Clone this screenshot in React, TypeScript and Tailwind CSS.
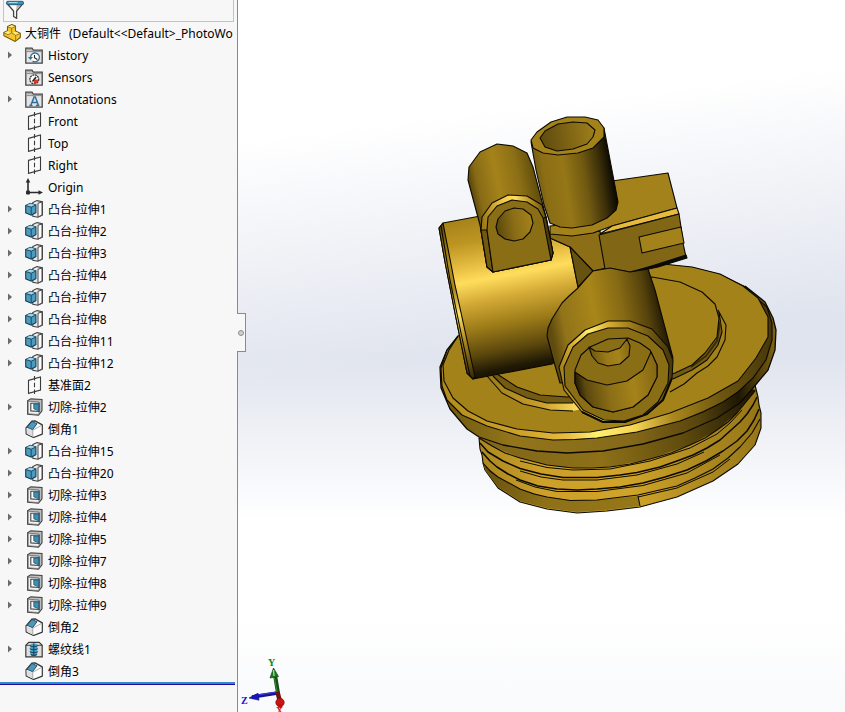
import { useState } from "react";

type IconName =
  | "history"
  | "sensors"
  | "annotations"
  | "plane"
  | "origin"
  | "boss"
  | "cut"
  | "chamfer"
  | "thread";

interface Feature {
  label: string;
  icon: IconName;
  expandable?: boolean;
}

const features: Feature[] = [
  { label: "History", icon: "history", expandable: true },
  { label: "Sensors", icon: "sensors" },
  { label: "Annotations", icon: "annotations", expandable: true },
  { label: "Front", icon: "plane" },
  { label: "Top", icon: "plane" },
  { label: "Right", icon: "plane" },
  { label: "Origin", icon: "origin" },
  { label: "凸台-拉伸1", icon: "boss", expandable: true },
  { label: "凸台-拉伸2", icon: "boss", expandable: true },
  { label: "凸台-拉伸3", icon: "boss", expandable: true },
  { label: "凸台-拉伸4", icon: "boss", expandable: true },
  { label: "凸台-拉伸7", icon: "boss", expandable: true },
  { label: "凸台-拉伸8", icon: "boss", expandable: true },
  { label: "凸台-拉伸11", icon: "boss", expandable: true },
  { label: "凸台-拉伸12", icon: "boss", expandable: true },
  { label: "基准面2", icon: "plane" },
  { label: "切除-拉伸2", icon: "cut", expandable: true },
  { label: "倒角1", icon: "chamfer" },
  { label: "凸台-拉伸15", icon: "boss", expandable: true },
  { label: "凸台-拉伸20", icon: "boss", expandable: true },
  { label: "切除-拉伸3", icon: "cut", expandable: true },
  { label: "切除-拉伸4", icon: "cut", expandable: true },
  { label: "切除-拉伸5", icon: "cut", expandable: true },
  { label: "切除-拉伸7", icon: "cut", expandable: true },
  { label: "切除-拉伸8", icon: "cut", expandable: true },
  { label: "切除-拉伸9", icon: "cut", expandable: true },
  { label: "倒角2", icon: "chamfer" },
  { label: "螺纹线1", icon: "thread", expandable: true },
  { label: "倒角3", icon: "chamfer" },
];

const Folder = () => (
  <>
    <path d="M.8 17.2V2.2H7l1.2 2h9v13z" fill="#e4e4e4" stroke="#444" strokeWidth="1.3" />
    <path d="M1.5 5.6h15.2" stroke="#8a8a8a" strokeWidth="1" />
    <path d="M1.6 3h5l1 1.6h-6z" fill="#a8a8a8" />
  </>
);

const FeatureIcon = ({ name }: { name: IconName }) => (
  <svg viewBox="0 0 18 18" className="size-[18px] shrink-0" fill="none" aria-hidden="true">
    {name === "history" && (
      <>
        <Folder />
        <circle cx="10" cy="11.5" r="4.2" fill="#fff" />
        <path d="M5.6 11.5a4.4 4.4 0 1 1 2 3.6" stroke="#2f7196" strokeWidth="1.3" />
        <path d="M3 11h5l-2.5 3z" fill="#2f7196" />
        <path d="M9.5 9v2.7l2.8 1.8" stroke="#222" strokeWidth="1.1" />
      </>
    )}
    {name === "sensors" && (
      <>
        <Folder />
        <circle cx="9.3" cy="11.3" r="4.4" fill="#fff" stroke="#333" strokeWidth="1.3" strokeDasharray="2 .6" />
        <path d="M9.3 11.5h4.2a4.2 4.2 0 0 1-4.8 4.2z" fill="#e2341d" />
        <path d="M7.5 13.5l3.6-4.4" stroke="#222" strokeWidth="1.6" />
      </>
    )}
    {name === "annotations" && (
      <>
        <Folder />
        <path
          d="M8.3 7h2l3 8M9 7.4l-3.2 7.8M6.8 12.4h5M4.3 15.5h3.2M10.8 15.5h3.6"
          stroke="#2f7196"
          strokeWidth="1.5"
        />
      </>
    )}
    {name === "plane" && (
      <>
        <path d="M3.5 4.4l12-3.4v13l-12 3.4z" fill="#fafafa" stroke="#3a3a3a" strokeWidth="1.1" />
        <path d="M9.5 0v18" stroke="#3a3a3a" strokeWidth="1.1" strokeDasharray="4.5 2.2" />
      </>
    )}
    {name === "origin" && (
      <>
        <path d="M3 3v11.5h12" stroke="#2b2b2b" strokeWidth="1.6" />
        <path d="M3 0l2.3 4.6H.7zM18 14.5l-4.5-2.2v4.4z" fill="#2b2b2b" />
        <rect x="1" y="12.5" width="4" height="4" rx="1" fill="#2b2b2b" />
      </>
    )}
    {name === "boss" && (
      <>
        <path d="M7.8 2.4L12 .6l5.4 1.2v13.4l-4.6 2-5-1z" fill="#e9e9e9" stroke="#444" strokeWidth="1.1" />
        <path d="M13 3.2l4-1.2v13l-4 2z" fill="#fff" stroke="#444" strokeWidth="1" />
        <path d="M.7 5.4l4.6-2 5.6 1.6v7.6l-4.7 2.6-5.5-2.4z" fill="#4c9cc0" stroke="#173f55" strokeWidth="1.1" />
        <path d="M.9 5.6l5.4 1.5L10.800 5l-5.400-1.500z" fill="#9dd1e6" />
        <path d="M.8 5.6l5.4 1.6v7.8M6.2 7.2L10.800 5" stroke="#173f55" strokeWidth=".9" />
      </>
    )}
    {name === "cut" && (
      <>
        <path d="M2.600 2.800L5.800.9l11.200.6v11.400L13.500 17.200 2.600 16.300z" fill="#bdbdbd" stroke="#444" strokeWidth="1.100" />
        <path d="M3.200 3.200l10.800.8v12.600l-10.800-.8z" fill="#f1f1f1" stroke="#666" strokeWidth=".8" />
        <path d="M5.800 5.300h8.400v8.200l-8.400-.6z" fill="#fff" stroke="#444" strokeWidth="1.100" />
        <path d="M8.800 6h4.800v6.800l-4.800-2z" fill="#3d8fb6" stroke="#205670" strokeWidth=".8" />
      </>
    )}
    {name === "chamfer" && (
      <>
        <path d="M1 7.800L6.800 1.200 10 .9l7.300 4v9.200L8.500 17.500 1.200 14z" fill="#fff" stroke="#333" strokeWidth="1.200" strokeLinejoin="round" />
        <path d="M1.600 8.200l6.400 2.600v6L1.800 13.700z" fill="#dedede" />
        <path d="M2 7.300l5-5.800 5 2.200-4.400 6z" fill="#4c97ba" stroke="#1d4b63" strokeWidth=".9" />
        <path d="M7.800 10.200v7M7.800 10.200l9.200-5" stroke="#999" strokeWidth=".8" />
      </>
    )}
    {name === "thread" && (
      <>
        <path d="M.8 16.8V5.2l3-2.8h10.4l3 2.8v11.6z" fill="#dedede" stroke="#3a3a3a" strokeWidth="1.2" />
        <path d="M1 5.3h16" stroke="#3a3a3a" strokeWidth=".9" />
        <rect x="5.3" y="3.4" width="7" height="12.4" rx="2.5" fill="#4a9dc6" />
        <path
          d="M4.8 5.5c1 1.6 7 1.6 8 0M4.8 8.5c1 1.6 7 1.6 8 0M4.8 11.5c1 1.6 7 1.6 8 0M5.8 14.400c1 1.400 5 1.400 6 0M8.800 3.500v12.500"
          stroke="#16465f"
          strokeWidth="1.1"
        />
      </>
    )}
  </svg>
);

const FilterIcon = () => (
  <svg viewBox="0 0 18 19" className="h-[19px] w-[18px] shrink-0" aria-hidden="true">
    <path d="M1 3.5L7.6 11v5.5l3 1.8V11l6.3-7.5z" fill="#fff" stroke="#444" strokeWidth="1.3" />
    <path d="M10 10.5l5-6v-1h-4z" fill="#b5b5b5" />
    <rect x=".6" y="1.3" width="16.8" height="3.4" rx="1.2" fill="#3f92ba" stroke="#1f5772" strokeWidth=".9" />
    <path d="M2.5 2.5h9" stroke="#a8dcf0" />
  </svg>
);

const PartIcon = () => (
  <svg viewBox="0 0 18 18" className="size-[18px] shrink-0" aria-hidden="true" strokeLinejoin="round">
    <path
      d="M.8 8.500l3.700-1.700V2.500L8.800.6l3.700 1.500v5l4.800 2.200v4.200L12.200 17.400.9 11.800z"
      fill="#f3c72c"
      stroke="#7c5c0c"
      strokeWidth="1.1"
    />
    <path d="M5 2.700L8.800 1.200l3.200 1.200-3.400 1.500zM1.300 8.700l3.500-1.600 3.500 1.900-3.200 1.600zM9.500 8.800l3-1.100 4.200 1.900-3.800 1.800z" fill="#ffe98a" />
    <path d="M8.600 4.200v4.600l4 2.500v5.800M12.600 11.300l4.500-1.900M8.600 4.200l3.700-1.700M4.700 2.800l3.900 1.400M1 8.800l4 2M5 10.800l3.600-2" fill="none" stroke="#8b6a10" strokeWidth=".8" />
  </svg>
);

const FeatureRow = ({ feature }: { feature: Feature }) => {
  const [open, setOpen] = useState(false);
  return (
    <li className="flex h-[22px] items-center">
      <div className="flex w-[25px] shrink-0 pl-[7px]">
        {feature.expandable && (
          <button
            aria-label={`Expand ${feature.label}`}
            aria-expanded={open}
            onClick={() => setOpen(!open)}
            className="flex h-4 w-3 items-center"
          >
            <svg viewBox="0 0 6 8" className="h-2 w-[6px]">
              <path d="M1 .5l4 3.5-4 3.5z" fill="#6a6a6a" />
            </svg>
          </button>
        )}
      </div>
      <FeatureIcon name={feature.icon} />
      <span className="pt-[2px] pl-[5px] whitespace-nowrap">{feature.label}</span>
    </li>
  );
};

const FeatureTree = () => (
  <aside className="flex w-[238px] shrink-0 flex-col border-r border-[#8a8a8a] bg-[#f7f7f7] pr-[2px]">
    <label className="mr-px ml-[3px] flex h-[22px] items-start border border-t-0 border-[#c3c3c3] pl-[2px]">
      <FilterIcon />
      <input type="text" aria-label="Filter" className="h-full min-w-0 flex-1 bg-transparent px-1 outline-none" />
    </label>
    <div className="flex h-[22px] items-center gap-1 overflow-hidden pl-[3px]">
      <PartIcon />
      <h1 className="flex gap-2 pt-[2px] whitespace-nowrap">
        <span>大铜件</span>
        <span>(Default&lt;&lt;Default&gt;_PhotoWo</span>
      </h1>
    </div>
    <ul>
      {features.map((feature) => (
        <FeatureRow key={feature.label} feature={feature} />
      ))}
    </ul>
    <div className="h-[3px] border-b border-[#1c0a9c] bg-[#318bcb]" />
  </aside>
);

const Face = ({ pts, fill }: { pts: string; fill: string }) => (
  <polygon points={pts} fill={fill} stroke="none" />
);

const Shade = ({ id, line, stops }: { id: string; line: number[]; stops: [number, string][] }) => (
  <linearGradient id={id} gradientUnits="userSpaceOnUse" x1={line[0]} y1={line[1]} x2={line[2]} y2={line[3]}>
    {stops.map(([offset, color]) => (
      <stop key={offset} offset={offset} stopColor={color} />
    ))}
  </linearGradient>
);

const Model = () => (
  <svg
    viewBox="238 0 607 712"
    className="h-full w-full"
    role="img"
    aria-label="大铜件"
    fill="none"
    stroke="#0c0900"
    strokeWidth="1.1"
    strokeLinejoin="round"
  >
    <defs>
      <Shade id="barrel" line={[497, 212, 528, 372]} stops={[[0, "#a5821a"], [0.15, "#bd9522"], [0.3, "#e8bf43"], [0.39, "#ffdd5c"], [0.52, "#d4aa36"], [0.68, "#9c7b18"], [0.84, "#5c480d"], [0.95, "#1f1804"], [1, "#151002"]]} />
      <Shade id="barrelRim" line={[440, 225, 473, 378]} stops={[[0, "#5e490d"], [0.25, "#b38d1d"], [0.42, "#a98519"], [0.58, "#ffe56a"], [0.75, "#b08a1c"], [1, "#33280a"]]} />
      <Shade id="tube" line={[535, 190, 613, 178]} stops={[[0, "#6f5811"], [0.15, "#8b6e15"], [0.4, "#957717"], [0.65, "#705911"], [0.85, "#3d300a"], [1, "#0d0a01"]]} />
      <Shade id="tubeBore" line={[540, 140, 595, 132]} stops={[[0, "#5f4b0e"], [0.35, "#735b12"], [1, "#9f7e1a"]]} />
      <Shade id="lug" line={[470, 190, 540, 176]} stops={[[0, "#574409"], [0.12, "#866a15"], [0.4, "#a5831a"], [0.7, "#8c6f16"], [1, "#584509"]]} />
      <Shade id="lugEdge" line={[483, 220, 546, 210]} stops={[[0, "#9c7b18"], [0.35, "#f2c948"], [0.55, "#ffdc62"], [0.8, "#b18b1e"], [1, "#5f4b0f"]]} />
      <Shade id="lugBore" line={[496, 228, 533, 222]} stops={[[0, "#5b470c"], [0.5, "#8a6d16"], [1, "#a5831b"]]} />
      <Shade id="pipe" line={[550, 325, 663, 303]} stops={[[0, "#5f4b0e"], [0.12, "#91731a"], [0.4, "#a88619"], [0.65, "#856914"], [0.85, "#56430c"], [1, "#1c1503"]]} />
      <Shade id="pipeEdge" line={[560, 365, 672, 345]} stops={[[0, "#a58219"], [0.15, "#dcb138"], [0.3, "#ffee6c"], [0.48, "#d8ae37"], [0.7, "#94751a"], [1, "#3f320a"]]} />
      <Shade id="pipeBore" line={[576, 390, 657, 376]} stops={[[0, "#1f1804"], [0.12, "#5c490e"], [0.4, "#8b6e16"], [0.7, "#a5831a"], [1, "#846813"]]} />
      <Shade id="innerBore" line={[590, 358, 630, 350]} stops={[[0, "#6a540f"], [0.4, "#9a7a18"], [0.7, "#a5831a"], [1, "#846813"]]} />
      <Shade id="discSide" line={[440, 410, 776, 370]} stops={[[0, "#6c560f"], [0.2, "#93751a"], [0.55, "#85691a"], [0.75, "#5a460d"], [0.88, "#1e1703"], [0.96, "#5a460c"], [1, "#7b6113"]]} />
      <Shade id="discEdge" line={[443, 400, 770, 380]} stops={[[0, "#b18c1d"], [0.25, "#d1a42a"], [0.38, "#e8c043"], [0.46, "#fff070"], [0.58, "#f5d455"], [0.7, "#a9861d"], [0.85, "#6c5610"], [1, "#4a3a0b"]]} />
      <Shade id="neck" line={[490, 450, 755, 400]} stops={[[0, "#80661a"], [0.4, "#8d7017"], [0.7, "#624d0e"], [1, "#1d1603"]]} />
      <Shade id="threads" line={[480, 470, 762, 420]} stops={[[0, "#a9861d"], [0.2, "#cca029"], [0.5, "#d0a429"], [0.75, "#af8b20"], [1, "#957517"]]} />
      <Shade id="skirt" line={[484, 480, 640, 505]} stops={[[0, "#69520f"], [0.4, "#8d7018"], [1, "#967819"]]} />
      <Shade id="groove" line={[490, 390, 580, 408]} stops={[[0, "#a07e1a"], [0.6, "#caa02c"], [1, "#ffdf62"]]} />
    </defs>

    {/* threaded base */}
    <polygon
      fill="url(#threads)"
      points="479,438 480,449 482,455 483,463 485,470 498,488 520,502 547,509 577,513 607,511 640,507 677,497 713,481 738,464 755,445 761,428 761,413 759,405 758,397 755,385 620,400"
    />
    <Face
      fill="url(#skirt)"
      pts="485,470 483,463 498,477 520,489 547,497 570,500 597,500 638,496 640,506 607,510 577,512 547,508 520,501 498,487"
    />
    <polyline points="483,463 490,471 498,477 520,489 534,494 547,497 570,500.500 597,500 638,495 677,486 695,478 713,469 728,458 740,447 752,433 760,419" />
    <polyline points="638,497 677,488 713,472 730,459" strokeWidth="1" />
    <polyline points="638,496 640,506" />
    <polyline points="482,452 490,461 497,467 508,474 520,480 538,486 557,489 577,490 597,489 620,487 643,483 665,477 687,470 706,461 723,451 737,441 747,431 754,420 759,409" strokeWidth="1.500" />
    <polyline points="516,480 535,487 557,491.500 597,491.500 643,485.500 687,473 720,455" strokeWidth="1" />
    <polyline points="480,443 488,452 503,461 520,468.500 541,474 563,477.500 597,477.500 620,475 637,472.500 660,467 677,461 693,455 707,448 720,440 730,431 740,422 747,414 753,405 757,397" strokeWidth="1.500" />
    <polyline points="520,471 541,477 563,480 597,480 637,475 677,464 704,452" strokeWidth="1" />
    <polyline points="520,461 547,467.500 573,470 610,469 650,461 690,448 717,434 730,423 742,410" strokeWidth="1" />
    <Face
      fill="url(#neck)"
      pts="479,438 492,446 520,458 547,465 573,468 610,467 650,459 690,445 717,430 737,413 756,390 700,380 500,420"
    />
    <polyline points="479,438 492,446 505,453 520,458 547,465 573,468 592,468 610,467 630,464 650,459 671,453 690,445 705,438 717,430 728,422 737,413 755,391" />

    {/* flange disc */}
    <Face
      fill="url(#discSide)"
      pts="458,336 447,350 440,367 441,388 450,409 467,429 479,437 503,445 537,451 567,453 603,451 643,444 683,433 717,418 740,403 753,388 768,370 775,350 776,330 773,318 765,302 745,286 720,274 692,267 663,264"
    />
    <Face
      fill="url(#discEdge)"
      pts="447,350 441,368 442,386 447,400 462,415 487,426 520,436 553,440 597,438 637,432 680,421 723,402 748,384 766,360 772,340 772,323 767,307 743,286 600,300"
    />
    <polyline points="447,350 441,368 442,386 447,400 462,415 487,426 520,436 553,440 575,439.500 597,438 637,432 680,421 703,412 723,402 738,392 753,378 766,360 772,340 772,323 767,307 743,286" />
    <polygon
      points="458,336 449,350 443,365 444,381 453,398 468,411 487,421 517,429 553,433 590,432 630,425 670,413 708,398 738,381 756,358 768,337 768,317 758,298 743,286 720,274 692,267 663,264 560,290"
      fill="#a3821a"
    />
    <polyline points="458,336 447,350 440,367 441,388 450,409 467,429 479,437 503,445 537,451 567,453 603,451 643,444 683,433 717,418 740,403 753,388 768,370 775,350 776,330 773,318 765,302 745,286" strokeWidth="1.300" />

    {/* raised platform */}
    <Face fill="url(#groove)" pts="487,376 502,393 523,404 550,410 573,411 620,400 600,300" />
    <polyline points="487,376 502,393 523,404 550,410 573,411" />
    <Face fill="#a3821a" pts="670,392 697,373 717,357 725,340 726,325 719,312 660,340" />
    <polyline points="670,392 684,384 697,373 708,366 717,357 725,340 726,325 718,310" />
    <Face
      pts="493,376 505,388 527,398 547,403 573,403 620,395 673,379 692,370 707,360 718,345 722,332 719,312 600,300"
      fill="#735b12"
    />
    <polyline points="493,376 505,388 527,398 547,403 573,403" />
    <polyline points="673,379 692,370 707,360 718,345 722,332 719,312" />
    <polyline points="691,367 706,356 717,341 720,322" stroke="#3a2e08" strokeWidth="2" />
    <polygon
      points="497,374 517,387 540,395 567,397 610,393 675,373 692,365 705,353 717,337 719,318 715,304 702,292 680,282 652,277 560,300"
      fill="#a3821a"
    />

    {/* horizontal barrel */}
    <polygon
      points="443,223 439,228 445,262 455,313 467,373 473,379 552,364 590,330 578,287 570,247 550,238 520,208 475,217"
      fill="url(#barrel)"
    />
    <polygon points="443,223 439,228 445,262 455,313 467,373 473,379 475,377 455,285" fill="url(#barrelRim)" />
    <polyline points="441,226 450,280 461,333 470,376" />

    {/* web between the barrel and the block */}
    <polygon points="550,232 570,235 600,231 606,268 593,271 570,247 550,238" fill="#8b6e16" />
    <polygon points="570,247 593,271 578,287" fill="#67520f" />

    {/* block */}
    <polygon points="612,181 668,173 677,208 612,226 593,233 572,236 550,234 550,226 590,222" fill="#a3821b" />
    <polygon points="612,226 677,208 679,214 600,234" fill="#e6bb3d" />
    <polygon points="599,235 679,214 681,227 683,243 686,257 630,272 613,269 605,269" fill="#806615" />
    <polygon points="639,237 681,227 684,243 642,253" fill="#a3821b" />
    <polygon points="686,255 687,258 658,267 630,273" fill="#0c0900" />

    {/* vertical tube */}
    <polygon points="531,142 536,170 544,205 550,223 560,227 572,228 592,225 607,218 616,210 618,202 604,128" fill="url(#tube)" />
    <polygon
      points="531,140 537,132 551,122 567,117 585,117 598,120 604,128 604,137 598,143 593,148 578,153 558,155 543,153 533,148"
      fill="#a3821a"
    />
    <polygon
      points="540,138 545,131 558,124 573,122 587,123 595,130 593,137 587,144 573,149 557,151 545,147"
      fill="url(#tubeBore)"
    />

    {/* lug */}
    <polygon
      points="469,167 480,152 497,144 513,146 527,153 533,167 546,217 553,253 551,260 493,272 487,267 480,225 468,180"
      fill="url(#lug)"
    />
    <polygon
      points="481,230 482,217 492,203 508,195 527,196 542,205 546,217 553,253 551,260 493,272 487,267"
      fill="url(#lugEdge)"
    />
    <polygon points="481,230 487,230 493,272 487,267" fill="#71590f" />
    <polygon points="542,219 546,217 553,253 551,260" fill="#4d3d0b" />
    <polygon
      points="487,230 488,217 497,206 512,200 527,202 538,209 543,218 551,260 493,272"
      fill="#8a6e16"
    />
    <polygon
      points="496,227 498,219 505,211 514,208 523,209 531,215 533,223 530,232 523,239 514,241 505,239 498,234"
      fill="url(#lugBore)"
    />

    {/* front pipe */}
    <polygon
      points="593,271 610,268 630,272 648,269 655,290 673,358 640,380 560,383 554,362 547,336 548,328 552,319 562,303 569,296 578,288"
      fill="url(#pipe)"
    />
    <polygon
      points="559,367 568,345 585,330 608,321 630,321 652,329 668,347 673,360 672,378 663,400 647,414 625,422 603,422 582,412 564,390"
      fill="url(#pipeEdge)"
    />
    <polyline points="672,378 663,400 647,414 625,422 603,422 582,412" strokeWidth="2" />
    <polygon
      points="564,367 573,347 588,334 608,328 628,328 648,336 663,350 669,365 668,383 658,402 643,415 624,421 604,420 583,410 565,386"
      fill="#8a6e16"
    />
    <polygon
      points="575,370 581,355 590,347 608,339 628,338 640,343 650,350 657,365 657,377 648,395 633,407 613,412 593,407 580,395 575,383"
      fill="#8a6e16"
    />
    <polygon
      points="575,372 587,380 607,385 627,381 643,370 651,352 657,365 657,377 648,395 633,407 613,412 593,407 580,395 575,383"
      fill="url(#pipeBore)"
    />
    <polygon
      points="589,347 595,351 608,352 620,348 627,339 630,346 629,356 620,364 608,366 598,363 592,356"
      fill="url(#innerBore)"
    />
  </svg>
);

const Triad = () => (
  <svg
    viewBox="0 0 50 56"
    className="absolute bottom-0 left-0 h-14 w-[50px] font-['Liberation_Serif',serif] text-[10px] font-bold"
    aria-label="Axes"
  >
    <path d="M39.5 37L14 41" stroke="#15158f" strokeWidth="3.6" />
    <path d="M39 36L14 40" stroke="#3b3be0" strokeWidth="1.2" />
    <path d="M11 42l9-4.8 1 7z" fill="#1717c4" stroke="#0b0b80" strokeWidth=".6" />
    <path d="M40 37l-3-18" stroke="#145214" strokeWidth="4" />
    <path d="M39 36l-3-17" stroke="#3c8a3c" strokeWidth="1" />
    <path d="M35.500 12l5 8.500-8.500 1.500z" fill="#1f7a1f" stroke="#0f440f" strokeWidth=".7" />
    <path d="M35.500 14l.5 6" stroke="#a6dba6" strokeWidth="1.3" />
    <path d="M39.5 36l2.5 10" stroke="#731010" strokeWidth="4.5" />
    <circle cx="42" cy="46.500" r="4.200" fill="#c81414" stroke="#7e0c0c" strokeWidth=".7" />
    <path d="M38.5 48.500h7L42.500 53z" fill="#b80f0f" />
    <text x="30" y="10" fill="#0a870a">Y</text>
    <text x="3" y="48" fill="#1010e0">Z</text>
    <text x="38" y="58" fill="#f01010">X</text>
  </svg>
);

const App = () => {
  return (
    <div className="flex h-screen min-h-[712px] w-full overflow-hidden bg-white font-['Noto_Sans','Noto_Sans_CJK_SC',sans-serif] text-xs leading-4 text-black">
      <FeatureTree />
      <main className="relative min-w-0 flex-1 bg-[linear-gradient(180deg,#ffffff00_50%,#ffffff_73%,#ffffff_86%,#f9fafc_100%),linear-gradient(173deg,#ffffff_18%,#e0e4ee_49%,#e0e4ee_100%)]">
        <Model />
        <button
          aria-label="Collapse panel"
          className="absolute top-[313px] -left-px flex h-[39px] w-[9px] items-center justify-center border border-l-0 border-[#8a8a8a] bg-[#f7f7f7]"
        >
          <span className="size-[6px] rounded-full border border-[#8f8f8f] bg-[#cfcfcf]" />
        </button>
        <Triad />
      </main>
    </div>
  );
};

export default App;
